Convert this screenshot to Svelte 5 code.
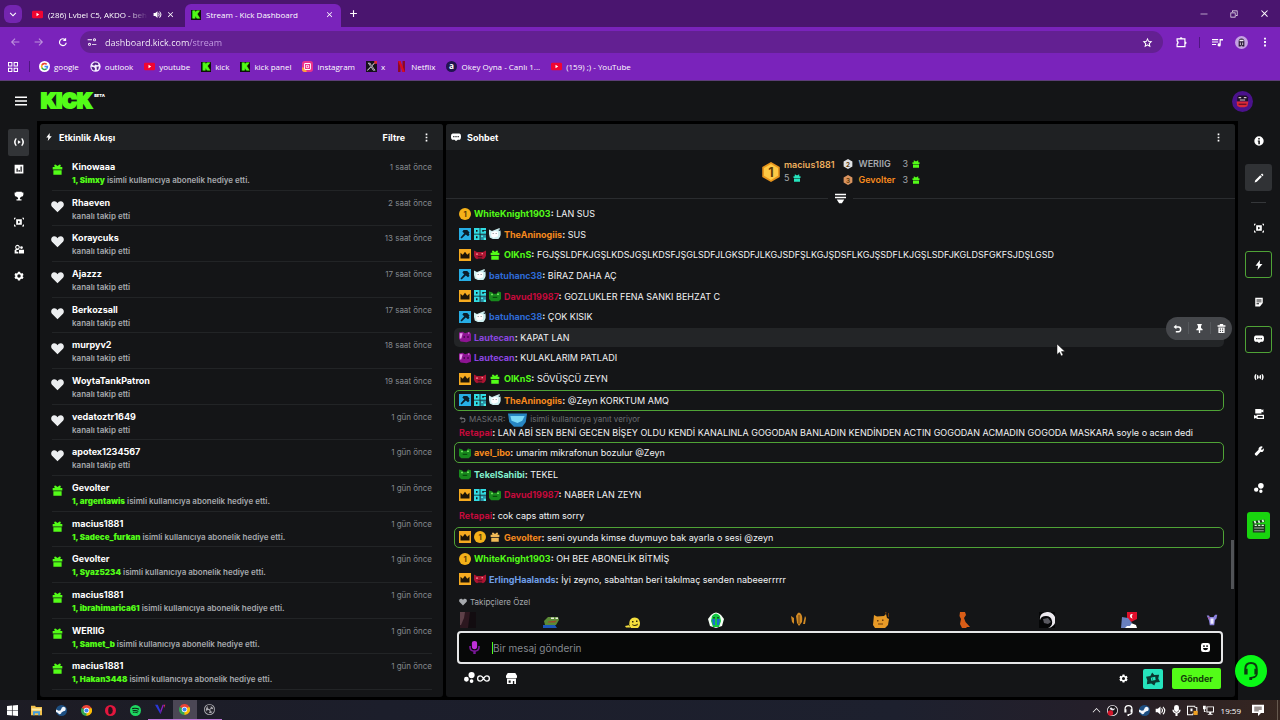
<script lang="ts">
    type Shape = [fill: string, d: string];

    const ink = 'currentColor';

    // every drawing sits on a 16x16 grid
    const art: Record<string, Shape[]> = {
        chevronDown: [[ink, 'M3 5l5 5 5-5 1.5 1.6L8 13.2 1.5 6.600z']],
        chevronUp: [[ink, 'M2 11.5l6-6 6 6 .9-1L8 3.6 1.1 10.5z']],
        youtube: [['#f00532', 'M2 2.5h12q2 0 2 2v7q0 2-2 2H2q-2 0-2-2v-7q0-2 2-2z'], ['#fff', 'M6.5 5.500v5l4-2.5z']],
        speaker: [[ink, 'M1 5.500h3L8 2v12l-4-3.5H1zM10 4.5q3.5 3.5 0 7l-1-1q2-2.5 0-5zM12 2q6 6 0 12l-1-1.2q4.5-4.8 0-9.6z']],
        close: [[ink, 'M2 3.2L3.2 2 8 6.8 12.8 2 14 3.2 9.2 8l4.8 4.8-1.2 1.2L8 9.2 3.2 14 2 12.8 6.8 8z']],
        plus: [[ink, 'M7 2h2v5h5v2H9v5H7V9H2V7h5z']],
        back: [[ink, 'M7.5 2l1.2 1.2-4 4H15v1.6H4.7l4 4L7.5 14l-6-6z']],
        forward: [[ink, 'M8.5 2L7.3 3.2l4 4H1v1.6h10.3l-4 4L8.5 14l6-6z']],
        reload: [[ink, 'M13 1v5.5H7.5l2.2-2.2A4.4 4.4 0 1 0 12.2 9h1.9A6.3 6.3 0 1 1 11 2.9z']],
        site: [[ink, 'M1 3.5h7V5H1zM12 2a2.4 2.4 0 1 1 0 4.8A2.4 2.4 0 1 1 12 2zm0 1.4a1 1 0 1 0 0 2 1 1 0 1 0 0-2zM8 11h7v1.5H8zM4 9.3a2.4 2.4 0 1 1 0 4.8A2.4 2.4 0 1 1 4 9.3zm0 1.4a1 1 0 1 0 0 2 1 1 0 1 0 0-2z']],
        star: [[ink, 'M8 1l2.100 4.700 5 .6-3.700 3.500 1 5L8 12.300l-4.400 2.500 1-5L.9 6.300l5-.6zm0 3.400L6.900 6.900l-2.700.4 2 1.900-.5 2.700L8 10.500l2.300 1.400-.5-2.700 2-1.900-2.700-.4z']],
        puzzle: [[ink, 'M2 3h4.200a2 2 0 0 1 3.800 0h4v4.200a2 2 0 0 1 0 3.800v4H2v-4.600a2 2 0 0 0 0-3.400zm1.600 1.600v1.500a3.600 3.600 0 0 1 0 5.200v2.100h8.800V4.600z']],
        playlist: [[ink, 'M0 3h9v1.600H0zM0 6.500h9v1.600H0zM0 10h6v1.600H0zM11 3h5v2h-3.300v6.500a2.300 2.300 0 1 1-1.700-2.200z']],
        kebab: [[ink, 'M6.5 1h3v3h-3zM6.5 6.5h3v3h-3zM6.5 12h3v3h-3z']],
        minimize: [[ink, 'M1 7.4h14v1.200H1z']],
        restore: [[ink, 'M1 5h10v10H1zm1.300 1.300v7.400h7.400V6.300zM4 1h11v11h-3v-1.300h1.700V2.300H5.300V4H4z']],
        apps: [[ink, 'M0 0h7v7H0zm1.600 1.600v3.800h3.800V1.600zM9 0h7v7H9zm1.600 1.600v3.800h3.800V1.600zM0 9h7v7H0zm1.600 1.600v3.800h3.800v-3.800zM9 9h7v7H9zm1.600 1.600v3.800h3.800v-3.800z']],
        google: [['#fff', 'M8 0a8 8 0 1 1 0 16A8 8 0 1 1 8 0z'], ['#ea4335', 'M3.2 5.3a5.5 5.5 0 0 1 8.8-1.2l-1.7 1.6A3.2 3.2 0 0 0 5.2 6.8z'], ['#fbbc05', 'M3.2 5.3l2 1.5q-.4 1.2 0 2.4l-2 1.5q-1.2-2.7 0-5.4z'], ['#34a853', 'M3.2 10.7l2-1.5a3.2 3.2 0 0 0 4.8 1.3l1.8 1.6a5.5 5.5 0 0 1-8.6-1.4z'], ['#4285f4', 'M8 7h5.4q.4 3.2-1.6 5.1L10 10.5q.7-.5.9-1.3H8z']],
        globe: [['#f4ecff', 'M8 .5a7.500 7.500 0 1 1 0 15 7.500 7.500 0 1 1 0-15z'], ['#55208a', 'M6 2l5 .5 1.500 2.500-2 1L8 5 6 7 3 5.500zM2 8.500l4 .5 1.500 2.500-1.500 2.500-3-2zM9.500 8.500l3.500-.5-1 4.500-2 .5z']],
        instagram: [['#e9338b', 'M4 0h8q4 0 4 4v8q0 4-4 4H4q-4 0-4-4V4q0-4 4-4z'], ['#fba33c', 'M0 9q6 1 7 7H4q-4 0-4-4z'], ['#fff', 'M5 3h6q2 0 2 2v6q0 2-2 2H5q-2 0-2-2V5q0-2 2-2zm-.7 1.3v7.400h7.400V4.300zM8 5.500a2.500 2.500 0 1 1 0 5 2.500 2.500 0 1 1 0-5zm0 1.200a1.300 1.300 0 1 0 0 2.600 1.300 1.300 0 1 0 0-2.600z']],
        xsite: [['#15111a', 'M0 0h16v16H0z'], ['#e7dfee', 'M2.5 2.500h3.300l8 11.200h-3.400zm1.800 1l6.600 9.200h1.100L5.300 3.500zM12 2.500h1.600l-11 11.200H1z'], ['#e02c35', 'M12 0h4v4h-4z']],
        netflix: [['#8f0720', 'M3 0h3.500v16H3zM9.500 0H13v16H9.500z'], ['#d90b20', 'M3 0h3.500L13 16H9.500z']],
        okey: [['#20144f', 'M8 0a8 8 0 1 1 0 16A8 8 0 1 1 8 0z']],
        menu: [[ink, 'M0 2h16v2H0zM0 7h16v2H0zM0 12h16v2H0z']],
        avatar: [['#4b128c', 'M8 0a8 8 0 1 1 0 16A8 8 0 1 1 8 0z'], ['#1d1028', 'M4 4.500l1-1h6l1.200 1.200V8H4z'], ['#d7c4cf', 'M5 4.500h2v1H5zM9 4.500h2v1H9zM6 6.500h4v.7H6z'], ['#db2937', 'M3.5 8h9l-.8 3.600-2.200.8H6l-2-.9z'], ['#651126', 'M5 9.600h6v1H5z']],
        profile: [['#c5a3e3', 'M8 0a8 8 0 1 1 0 16A8 8 0 1 1 8 0z'], ['#2a1a37', 'M4.500 8q-.5-5 3.500-5t3.500 5v5h-7z'], ['#f5edf9', 'M5.5 4.500h5v2h-5zM6 8h1v3H6zM9 8h1v3H9zM7 12h2v1H7z']],
        live: [[ink, 'M3.8 2.500L5 3.600q-3 4.400 0 8.800l-1.200 1.100q-5-5.500 0-11zM12.2 2.500L11 3.600q3 4.400 0 8.800l1.200 1.100q5-5.500 0-11zM6.500 5.500v5l4-2.500z']],
        stats: [[ink, 'M1 1h14v14H1zm3 6v5.500h2V7zm3.200 2.500v3h2v-3zm3.200-5.500v8.500h2V4z']],
        trophy: [[ink, 'M3.5 1h9v1.500H15V6q0 3-3.500 3L9.500 11v2H12v2H4v-2h2.500v-2l-2-2Q1 9 1 6V2.500h2.500z']],
        clip: [[ink, 'M3.5 3.500h9v9h-9zm3 2.300v4.500L10.300 8zM0 1h3v1.500H1.500V4H0zM13 1h3v3h-1.500V2.500H13zM0 12h1.500v1.500H3V15H0zM14.500 12H16v3h-3v-1.500h1.500z']],
        people: [[ink, 'M5.5 1a4 4 0 0 1 2.800 6.700L7 9.500H4v2.700h3V15H1v-5l2-2.200A4 4 0 0 1 5.500 1zm0 2a2 2 0 1 0 0 4 2 2 0 1 0 0-4zM12 3.500A2.200 2.200 0 1 1 12 8a2.200 2.200 0 1 1 0-4.500zM8 9h8v6H8z']],
        gear: [[ink, 'M6.3 1h3.400l.5 2 1.400.8 2-.6 1.700 3L13.900 7.600v1l1.400 1.300-1.700 3-2-.6-1.400.8-.5 2H6.300l-.5-2-1.400-.8-2 .6-1.700-3 1.400-1.300v-1L.7 6.200l1.700-3 2 .6L5.800 3zM8 5.300a2.700 2.700 0 1 0 0 5.500 2.700 2.700 0 1 0 0-5.500z']],
        bolt: [[ink, 'M9.5 0L2.500 9h4.200L5.500 16l8-9.500H9.200z']],
        bubble: [[ink, 'M3 2.500h10q3 0 3 5t-3 5h-2L8 14.500l-2.500-2H3q-3 0-3-5t3-5zm.5 4v2h2v-2zM7 6.500v2h2v-2zm3.500 0v2h2v-2z']],
        gift: [[ink, 'M1 4.500h3L3 1.500l2-.7 3 2.200 3-2.200 2 .7-1 3h3V8H1zM2 9h12v6.500H2z']],
        heart: [[ink, 'M8 15L1.200 8.200C-1 5.500.7 1.500 4 1.500c1.800 0 3.200.9 4 2.500.8-1.600 2.200-2.500 4-2.500 3.300 0 5 4 2.800 6.700z']],
        collapse: [[ink, 'M0 1h16v2.200H0zM0 5.500h16v2.200H0zM2.500 9.500h11L10 15H6z']],
        hexGold: [['#e8951c', 'M8 0l7 4v8l-7 4-7-4V4z'], ['#fec945', 'M8 1.500l5.600 3.300v6.200L8 14.300 2.400 11V4.800z']],
        hexSilver: [['#dfe1e5', 'M8 0l7 4v8l-7 4-7-4V4z']],
        hexBronze: [['#d9935f', 'M8 0l7 4v8l-7 4-7-4V4z']],
        coin: [['#f4b119', 'M8 0a8 8 0 1 1 0 16A8 8 0 1 1 8 0z']],
        hammer: [['#27aee5', 'M0 0h16v16H0z'], ['#0b1c29', 'M6 2.500h5L14 6l-1 1.500 1 1.500-2 2-3-2.200L3.500 14 2 12.500 7 7 4.500 5z']],
        og: [['#31dce3', 'M0 0h7.500v7.500H0zm2.700 2.500v2.500h2V2.500zM8.500 0H16v2.500h-5V5h2V3.500h3v4H8.500zM0 8.500h7.500V16H0zm2.700 2.500v2.500h2V11z'], ['#2a8fa4', 'M8.500 8.500H16V16H8.500z'], ['#49f1ea', 'M9.500 10H12v2H9.500zM13 13h3v3h-3z']],
        cat: [['#cfeff0', 'M0 2l4 2L9 2l5-2 1.500 5q.5 4-1 7l-2 2.500H5L1 12.500 0 8z'], ['#fff', 'M3 6l5-2 4 1v6l-6 2-3-2z'], ['#1b2830', 'M5 7h1v1H5zM9 6.500h1v1H9zM13 2h1.500v2H13z']],
        crown: [['#f6ab20', 'M0 0h16v16H0z'], ['#1c1508', 'M2 5l3 2.500L8 3.500l3 4L14 5v7.500H2z']],
        demon: [['#ad1432', 'M0 2l4 2h8l4-2v7q-1 4-4 4.500l-2-1H6l-2 1Q1 13 0 9z'], ['#ffb7b6', 'M3 6h2v1.500H3zM10 5.500h2V7h-2z'], ['#4b0a1c', 'M5 9.500h6V11H5z']],
        frog: [['#188a1d', 'M0 2l4 1 2 2h4l2-3 4 1v9l-3 3H3l-3-3z'], ['#8dfa70', 'M3 5h2v2H3zM11 4.500h2v2h-2z'], ['#06470c', 'M5 9h6v1.500H5z']],
        pig: [['#8d1493', 'M0 2l5-1 3 2 6-2 2 3v9l-6 2-8-1-2-4z'], ['#ee9af1', 'M1 3h4L3 10H1zM12 1.500l2 1-1 2z'], ['#3d0744', 'M6 7h2v2H6zM11 7h2v2h-2z']],
        reply: [[ink, 'M6 1v3h4q5 0 5 5.500T9.500 15H5v-2.400h4.500q2.800 0 2.800-3T9.800 6.600H6V9.500L1 5.300z']],
        pin: [[ink, 'M4 0h8v2l-1.300.8V7l2.800 2.500V11H9.200v5H6.800v-5H2.500V9.500L5.300 7V2.800L4 2z']],
        trash: [[ink, 'M5 0h6v2h4v3H1V2h4zM2.500 6h11v10h-11zm2.500 2v2h2V8zm4 0v2h2V8zm-4 4v2h2v-2zm4 0v2h2v-2z']],
        info: [[ink, 'M8 .5a7.500 7.500 0 1 1 0 15 7.500 7.500 0 1 1 0-15zM6.800 3v2.500h2.400V3zM6 7v1.600h.9V13h2.500V7z']],
        pencil: [[ink, 'M11 2.500L13 .8 15.200 3l-1.700 2zM10 3.500L12.500 6l-8 8L1 15l1-3.500z']],
        note: [[ink, 'M2 1h12v8.500L9.500 15H2zm2 3v1.400h8V4zm0 3v1.400h8V7zm0 3v1.400h4V10z']],
        signal: [[ink, 'M2.500 3L4 4Q2 8 4 12l-1.500 1Q-1.500 8 2.500 3zM13.500 3L12 4q2 4 0 8l1.500 1q4-5 0-10zM5.500 4.500l1.300.8v5.400l-1.300.8Q3.500 8 5.500 4.500zM10.500 4.500l-1.300.8v5.400l1.300.8q2-3.500 0-7zM7 7h2v2H7z']],
        cameras: [[ink, 'M2 0h10v2l3-1.500v5L12 4.500V7H2zM4 9h12v7H4v-2l-4 1.500v-6L4 11zm2 2v3h8v-3z']],
        wrench: [[ink, 'M9 1.500q3-2 5 0L11.500 4.200v1.600h1.800L15.500 3.500q1 4-1.500 5.500-1.500 1-3.500.3L5 15q-1.500 1-3-.5-1.400-1.400-.4-3L7.300 6Q6.700 3.400 9 1.500z']],
        dots: [[ink, 'M11 0a4.500 4.500 0 1 1 0 9 4.500 4.500 0 1 1 0-9zM3.500 7a3.500 3.500 0 1 1 0 7 3.500 3.500 0 1 1 0-7zM11 10.500a2.700 2.700 0 1 1 0 5.400 2.700 2.700 0 1 1 0-5.400z']],
        clapper: [['#1c3a1e', 'M1 6h14v9.500H1zM.5 2.500L14 .5l.6 3L1 5.700z'], ['#dfffdc', 'M2 2.400l2-.3 1 2.800-2 .3zM6.500 1.700l2-.3 1 2.800-2 .3zM11 1l2-.3 1 2.500-2 .5zM3 6.500h2.500V8H3zM7 6.500h2.500V8H7zM11 6.500h2.500V8H11z'], ['#7b8a7b', 'M2.500 9.500h11v1.500h-11zM2.500 12.500h11V14h-11z']],
        mic: [['#c030d8', 'M8 0q3.200 0 3.200 3v4q0 3-3.200 3T4.800 7V3Q4.800 0 8 0z'], ['#7a1899', 'M1.500 6h2v2Q4 11.500 8 11.500T12.500 8V6h2v2q-.3 4.500-5 5.200V16h-3v-2.800Q1.800 12.500 1.500 8z']],
        infinity: [[ink, 'M4 4q2 0 4 2.600Q10 4 12 4q4 0 4 4t-4 4q-2 0-4-2.600Q6 12 4 12q-4 0-4-4t4-4zm0 1.600Q1.600 5.600 1.600 8T4 10.400q1.500 0 3-2.400-1.500-2.400-3-2.400zm8 0Q10.500 5.600 9 8q1.500 2.400 3 2.400 2.400 0 2.400-2.400T12 5.600z']],
        store: [[ink, 'M2.500 0h11L16 4v2.500l-1 1H1l-1-1V4zM1.500 8.500h13V16H12v-4.500h-2V16H1.500zm2.300 2.500v3h3v-3z']],
        smile: [[ink, 'M4 0h8q4 0 4 4v8q0 4-4 4H4q-4 0-4-4V4q0-4 4-4zm0 4v3h2.500V4zm5.500 0v3H12V4zM3.500 9q.5 4 4.500 4t4.500-4z']],
        ticket: [['#0a3a32', 'M7 .5l2.500 3 5.500-.5-1 4.500 2 4-5 .5-1.500 3.500-3.500-2.500-5 1 .5-4.500L0 5.500l5-1z'], ['#25e4bd', 'M5.500 6.500l5-1 .5 3.500-5 1zm1.500 1v1h1v-1z']],
        headset: [[ink, 'M8 0q6 0 6 6.500V10q0 4-5 4.700V16H6.500v-2.500L9 13q3-.5 3.500-2H11V6h1.200Q12 1.800 8 1.800T3.800 6H5v5H2V6.500Q2 0 8 0z']],
        // emotes
        dark: [['#2c171f', 'M0 0h16v16H0z'], ['#5d4048', 'M0 0h5l-1 6-3 7H0z'], ['#120c10', 'M10 0h6v16H8z']],
        pepe: [['#5b8a36', 'M1 9L5 5h10l1 3-3 5H2z'], ['#e8ecd8', 'M8 5.500h3v1.500H8zM12.500 5.500h2.500v1.500h-2.500z'], ['#9b482e', 'M5 9.500l9-1-2 2H5z'], ['#1c57b8', 'M0 13h12l2 3H0z']],
        yellow: [['#f4df3d', 'M5 8q3-4 8-1.500 3 3.500 1.500 7.500L13 16H6q-3-3-1-8zM0 14l5-1v2.500H1z'], ['#332b0b', 'M7 9h1.500v1.500H7zM11 8.500h1.500V10H11zM7 12q3 2 6-.5l-.5 1.800q-3 1.500-5 0z']],
        crying: [['#f5fff4', 'M3 3q5-5 10 0l3 4-2 7-6 2-6-2-2-7z'], ['#13c943', 'M4 4q4-5 8 0l1 5-2 6H5L3 9z'], ['#1a6fcf', 'M4 7h3v6H5zM9 7h3l-1 6H9z'], ['#0c5a24', 'M5 5h2v1.500H5zM9 5h2v1.500H9z']],
        hands: [['#d18a25', 'M5 4q2-5 4-3 3 2 2 9l-3 4-2-3zM0 4l3 2v6l-2-2zM14 4l1 2-1 6h-2z'], ['#6a3e0d', 'M7.500 3h1v9h-1z']],
        orange: [['#e79a27', 'M1 3l3 1.500 7-.5 2-2 1 4 2 1-1 6-3 3H2L0 13z'], ['#6c3a0a', 'M4 8h1.500v1.500H4zM9 7.500h1.500V9H9zM5 11.500h5v1H5zM12 0h1.500v1.500H12zM15 1h1v4h-1z']],
        dino: [['#d95d17', 'M4 0h5l1 3-2 3 1.500 4 4.500 5h-3l-1 1H6L4 12l1-5-1.500-3z']],
        moon: [['#050607', 'M0 0h16v16H0z'], ['#ece9ef', 'M8 0a8 8 0 0 1 1 16q5-2 4-7T7 4Q2 4 1 8 0 1 8 0z'], ['#595960', 'M4 7l5-1 3 4-3 2-4-1z']],
        flag: [['#e00f2b', 'M6 0h10v7l-6 3-4-4z'], ['#fff', 'M10 2q-2 2 0 4l2 .5-1-1q-1-2 1-3zM5 12l5-1 5 2 1 3H3z'], ['#6880be', 'M1 5l6 1 4 5-2 3H6l-2 2H0z']],
        rabbit: [['#8b82dd', 'M1 2h3l1 2h5l2-3h3l-1 5-2 2-1 7H5L4 9z'], ['#edeaff', 'M6 6h4v7H6z'], ['#b04e90', 'M3 4h2v2H3z']],
        water: [['#2786c2', 'M0 3h16l-1 7-3 4H5l-4-4z'], ['#7ad9f5', 'M2 5h12l-2 4-4 2-5-2z']],
        // taskbar
        windows: [['#fff', 'M0 1.500L7.200.7v6.900H0zM8.200.6L16 0v7.600H8.200zM0 8.500h7.200v6.900L0 14.500zM8.200 8.500H16V16l-7.800-.7z']],
        folder: [['#f2c14e', 'M0 1h6l1 2h9v12H0z'], ['#fde9a3', 'M1 5h14v3H1z'], ['#3b9be0', 'M3 9h10v6h-2.500v-3h-5v3H3z']],
        steam: [['#1d4f82', 'M8 0a8 8 0 1 1 0 16A8 8 0 1 1 8 0z'], ['#f2f6fb', 'M11 2.500a3.300 3.300 0 1 1-.3 6.600L8 11a2.500 2.500 0 0 1-4.900.5L0 10V6.500l4 1.800q1-.6 2 0l1.700-2.600Q7.800 2.800 11 2.500z']],
        chrome: [['#34a853', 'M8 8L1.100 4A8 8 0 0 0 8 16l3.500-6z'], ['#fbbc05', 'M8 8l0 8A8 8 0 0 0 15 4H8z'], ['#ea4335', 'M8 8L1.100 4A8 8 0 0 1 15 4z'], ['#fff', 'M8 4a4 4 0 1 1 0 8 4 4 0 1 1 0-8z'], ['#4285f4', 'M8 5a3 3 0 1 1 0 6 3 3 0 1 1 0-6z']],
        opera: [['#e3173e', 'M8 0a8 8 0 1 1 0 16A8 8 0 1 1 8 0z'], ['#28121c', 'M8 2.500q3.300 1 3.300 5.500T8 13.500 4.700 8 8 2.500z']],
        spotify: [['#1ed760', 'M8 0a8 8 0 1 1 0 16A8 8 0 1 1 8 0z'], ['#0b1f13', 'M3 4.500q6-1.500 10.500 1l-.8 1.300Q8.500 4.800 3.400 6zM3.600 7.600q5-1.200 9 1l-.7 1.100Q8 8 4 9zM4 10.300q4.300-1 7.600.9l-.6.9q-3-1.500-6.600-.8z']],
        vee: [['#2b38d8', 'M0 1h4l4 9v5z'], ['#8a1fc9', 'M8 15V9l3-8h2z'], ['#e0314d', 'M13 1h2l-2 5z']],
        obs: [['#a9a9af', 'M8 0a8 8 0 1 1 0 16A8 8 0 1 1 8 0z'], ['#25242c', 'M8 1.200a6.800 6.800 0 1 1 0 13.600A6.800 6.800 0 1 1 8 1.200z'], ['#a9a9af', 'M6 2.500q-2 3 1.500 5l1-.3Q11 5 9.500 3.500q4 .5 4 4.500-2-2-4-.5l-.5 1q1 3.500 3.500 2.500-2 3.500-5.500 1.500Q9.500 11 7.500 9l-1-.3Q3 8.500 3 11 1.500 6 6 2.500z']],
        recording: [['#e8e4ea', 'M8 0a8 8 0 1 1 0 16A8 8 0 1 1 8 0z'], ['#18151a', 'M8 1.200a6.800 6.800 0 1 1 0 13.600A6.800 6.800 0 1 1 8 1.200z'], ['#e8e4ea', 'M4 5q2-3 4 0 2 1 4-1-1 4-4 4T4 5z'], ['#d3162b', 'M5 7.500a4 4 0 1 1 0 8 4 4 0 1 1 0-8z']],
        camtray: [[ink, 'M0 1h12v2h3v9H9v3H0zm1.500 1.500v11H8V12q2-1 5.500-1V4H11V2.500zM5 5h3v4H5z'], ['#f0a020', 'M9.500 8.500h6v6h-6z']],
        monitor: [[ink, 'M5 2h11v9h-4v2h2v1.300H7V13h2v-2H5zm1.400 1.400v6.200h8.200V3.400zM0 1h4v5H2.700v3H4v1.300H1.300V6H0z']],
        notify: [[ink, 'M0 1h16v11h-4l-4 4v-4H0zm3 2.500v1.200h10V3.500zm0 2.500v1.200h10V6zm0 2.500v1.200h6V8.500z']],
        micwhite: [[ink, 'M8 0q3.500 0 3.500 3v4q0 3-3.500 3T4.500 7V3Q4.500 0 8 0zM2 7h2q.5 4 4 4t4-4h2q-.3 4.500-4.500 5.500V16h-3v-3.500Q2.300 11.500 2 7z']],
    };

    const bookmarks = [
        { icon: 'google', title: 'google' },
        { icon: 'globe', title: 'outlook' },
        { icon: 'youtube', title: 'youtube' },
        { icon: 'kick', title: 'kick' },
        { icon: 'kick', title: 'kick panel' },
        { icon: 'instagram', title: 'instagram' },
        { icon: 'xsite', title: 'x' },
        { icon: 'netflix', title: 'Netflix' },
        { icon: 'okey', title: 'Okey Oyna - Canlı 1...' },
        { icon: 'youtube', title: '(159) ;) - YouTube' },
    ];

    const leftNav = ['live', 'stats', 'trophy', 'clip', 'people', 'gear'];
    const rightNav = ['clip', 'bolt', 'note', 'bubble', 'signal', 'cameras', 'wrench', 'dots', 'clapper'];
    const openPanels = ['bolt', 'bubble'];

    const activity: { name: string; time: string; gifted?: string }[] = [
        { name: 'Kinowaaa', time: '1 saat önce', gifted: 'Simxy' },
        { name: 'Rhaeven', time: '2 saat önce' },
        { name: 'Koraycuks', time: '13 saat önce' },
        { name: 'Ajazzz', time: '17 saat önce' },
        { name: 'Berkozsall', time: '17 saat önce' },
        { name: 'murpyv2', time: '18 saat önce' },
        { name: 'WoytaTankPatron', time: '19 saat önce' },
        { name: 'vedatoztr1649', time: '1 gün önce' },
        { name: 'apotex1234567', time: '1 gün önce' },
        { name: 'Gevolter', time: '1 gün önce', gifted: 'argentawis' },
        { name: 'macius1881', time: '1 gün önce', gifted: 'Sadece_furkan' },
        { name: 'Gevolter', time: '1 gün önce', gifted: 'Syaz5234' },
        { name: 'macius1881', time: '1 gün önce', gifted: 'ibrahimarica61' },
        { name: 'WERIIG', time: '1 gün önce', gifted: 'Samet_b' },
        { name: 'macius1881', time: '1 gün önce', gifted: 'Hakan3448' },
    ];

    type Message = { user: string; tone: string; badges: string[]; text: string; state?: string; reply?: boolean };

    const messages: Message[] = [
        { user: 'WhiteKnight1903', tone: 'lime', badges: ['coin'], text: 'LAN SUS' },
        { user: 'TheAninogiis', tone: 'orange', badges: ['hammer', 'og', 'cat'], text: 'SUS' },
        { user: 'OlKnS', tone: 'lime', badges: ['crown', 'demon', 'gift'], text: 'FGJŞSLDFKJGŞLKDSJGŞLKDSFJŞGLSDFJLGKSDFJLKGJSDFŞLKGJŞDSFLKGJŞSDFLKJGŞLSDFJKGLDSFGKFSJDŞLGSD' },
        { user: 'batuhanc38', tone: 'blue', badges: ['hammer', 'cat'], text: 'BİRAZ DAHA AÇ' },
        { user: 'Davud19987', tone: 'red', badges: ['crown', 'og', 'frog'], text: 'GOZLUKLER FENA SANKI BEHZAT C' },
        { user: 'batuhanc38', tone: 'blue', badges: ['hammer', 'cat'], text: 'ÇOK KISIK' },
        { user: 'Lautecan', tone: 'purple', badges: ['pig'], text: 'KAPAT LAN', state: 'hovered' },
        { user: 'Lautecan', tone: 'purple', badges: ['pig'], text: 'KULAKLARIM PATLADI' },
        { user: 'OlKnS', tone: 'lime', badges: ['crown', 'demon', 'gift'], text: 'SÖVÜŞCÜ ZEYN' },
        { user: 'TheAninogiis', tone: 'orange', badges: ['hammer', 'og', 'cat'], text: '@Zeyn KORKTUM AMQ', state: 'mention' },
        { user: 'Retapai', tone: 'red', badges: [], text: 'LAN ABİ SEN BENİ GECEN BİŞEY OLDU KENDİ KANALINLA GOGODAN BANLADIN KENDİNDEN ACTIN GOGODAN ACMADIN GOGODA MASKARA soyle o acsın dedi', reply: true },
        { user: 'avel_ibo', tone: 'orange', badges: ['frog'], text: 'umarim mikrafonun bozulur @Zeyn', state: 'mention' },
        { user: 'TekelSahibi', tone: 'mint', badges: ['frog'], text: 'TEKEL' },
        { user: 'Davud19987', tone: 'red', badges: ['crown', 'og', 'frog'], text: 'NABER LAN ZEYN' },
        { user: 'Retapai', tone: 'red', badges: [], text: 'cok caps attım sorry' },
        { user: 'Gevolter', tone: 'orange', badges: ['crown', 'coin', 'gift'], text: 'seni oyunda kimse duymuyo bak ayarla o sesi @zeyn', state: 'mention' },
        { user: 'WhiteKnight1903', tone: 'lime', badges: ['coin'], text: 'OH BEE ABONELİK BİTMİŞ' },
        { user: 'ErlingHaalands', tone: 'sky', badges: ['crown', 'demon'], text: 'İyi zeyno, sabahtan beri takılmaç senden nabeeerrrrr' },
    ];

    const emotes = ['dark', 'pepe', 'yellow', 'crying', 'hands', 'orange', 'dino', 'moon', 'flag', 'rabbit'];
    const apps = ['windows', 'folder', 'steam', 'chrome', 'opera', 'spotify', 'vee', 'chrome', 'obs'];
    const tray = ['chevronUp', 'recording', 'headset', 'steam', 'speaker', 'micwhite', 'camtray', 'monitor'];

    let draft = $state('');
    let url = $state('dashboard.kick.com/stream');
</script>

{#snippet icon(name: string, size: number, label = '')}
    <svg class="icon" width={size} height={size} viewBox="0 0 16 16" aria-hidden="true">
        {#each art[name] as [fill, d]}
            <path {fill} {d} fill-rule="evenodd" />
        {/each}
        {#if label}
            <text x="8" y="12" text-anchor="middle">{label}</text>
        {/if}
    </svg>
{/snippet}

{#snippet favicon(name: string)}
    {#if name === 'kick'}
        <span class="kick-mark">K</span>
    {:else}
        {@render icon(name, 11, name === 'okey' ? 'a' : '')}
    {/if}
{/snippet}

<div class="screen">
    <div class="tabs">
        <button class="tab-search" aria-label="Search tabs">{@render icon('chevronDown', 8)}</button>
        <div class="tab">
            {@render icon('youtube', 11)}
            <span class="tab-title faded">(286) Lvbel C5, AKDO - beh</span>
            {@render icon('speaker', 9)}
            <button aria-label="Close tab">{@render icon('close', 7)}</button>
        </div>
        <div class="tab active">
            <span class="kick-mark">K</span>
            <span class="tab-title">Stream - Kick Dashboard</span>
            <button aria-label="Close tab">{@render icon('close', 7)}</button>
        </div>
        <button class="new-tab" aria-label="New tab">{@render icon('plus', 9)}</button>
        <div class="window-buttons">
            <button aria-label="Minimize">{@render icon('minimize', 8)}</button>
            <button aria-label="Restore">{@render icon('restore', 8)}</button>
            <button aria-label="Close">{@render icon('close', 9)}</button>
        </div>
    </div>

    <div class="toolbar">
        <button class="dim" aria-label="Back">{@render icon('back', 10)}</button>
        <button class="dim" aria-label="Forward">{@render icon('forward', 10)}</button>
        <button aria-label="Reload">{@render icon('reload', 10)}</button>
        <div class="address">
            <span class="site-info">{@render icon('site', 10)}</span>
            <input aria-label="Address" bind:value={url} />
            {@render icon('star', 11)}
        </div>
        <div class="toolbar-end">
            <button aria-label="Extensions">{@render icon('puzzle', 12)}</button>
            <span class="rule"></span>
            <button aria-label="Media">{@render icon('playlist', 11)}</button>
            <button aria-label="Profile">{@render icon('profile', 13)}</button>
            <button aria-label="Menu">{@render icon('kebab', 10)}</button>
        </div>
    </div>

    <nav class="bookmarks">
        {@render icon('apps', 10)}
        <span class="rule"></span>
        {#each bookmarks as b}
            <a href="#top">{@render favicon(b.icon)}<span>{b.title}</span></a>
        {/each}
    </nav>

    <header class="site-header">
        <button aria-label="Menu">{@render icon('menu', 12)}</button>
        <a class="logo" href="#top">KICK<sup>BETA</sup></a>
        <button class="me" aria-label="Account">{@render icon('avatar', 21)}</button>
    </header>

    <div class="dashboard">
        <nav class="left-nav">
            <div class="left-items">
                {#each leftNav as item, i}
                    <button class:active={i === 0} aria-label={item}>{@render icon(item, i === 0 ? 12 : 10)}</button>
                {/each}
            </div>
        </nav>

        <main>
            <section class="panel feed">
                <div class="panel-head">
                    {@render icon('bolt', 8)}
                    <h2>Etkinlik Akışı</h2>
                    <button class="filter">Filtre</button>
                    <button aria-label="More">{@render icon('kebab', 9)}</button>
                </div>
                <ul>
                    {#each activity as a}
                        <li>
                            <span class="feed-icon" class:green={a.gifted}>{@render icon(a.gifted ? 'gift' : 'heart', a.gifted ? 11 : 13)}</span>
                            <div>
                                <strong>{a.name}</strong>
                                {#if a.gifted}
                                    <p><b>1, {a.gifted}</b> isimli kullanıcıya abonelik hediye etti.</p>
                                {:else}
                                    <p>kanalı takip etti</p>
                                {/if}
                            </div>
                            <time>{a.time}</time>
                        </li>
                    {/each}
                </ul>
            </section>

            <section class="panel chat">
                <div class="panel-head">
                    {@render icon('bubble', 10)}
                    <h2>Sohbet</h2>
                    <button class="last" aria-label="More">{@render icon('kebab', 9)}</button>
                </div>

                <div class="leaders">
                    <div class="first">
                        {@render icon('hexGold', 20, '1')}
                        <div>
                            <strong>macius1881</strong>
                            <span class="count teal">5 {@render icon('gift', 8)}</span>
                        </div>
                    </div>
                    <div class="others">
                        {@render icon('hexSilver', 10, '2')}
                        <strong class="grey">WERIIG</strong>
                        <span class="count">3 {@render icon('gift', 8)}</span>
                        {@render icon('hexBronze', 10, '3')}
                        <strong class="orange">Gevolter</strong>
                        <span class="count">3 {@render icon('gift', 8)}</span>
                    </div>
                </div>
                <div class="divider">
                    <button aria-label="Collapse">{@render icon('collapse', 11)}</button>
                </div>

                <div class="messages">
                    {#each messages as m}
                        <div class={['message', m.state]} class:reply={m.reply}>
                            {#if m.reply}
                                <div class="reply-to">{@render icon('reply', 7)} <span>MASKAR:</span> {@render icon('water', 19)} <span>isimli kullanıcıya yanıt veriyor</span></div>
                            {/if}
                            <div class="line">
                                {#each m.badges as badge}
                                    <span class="badge" class:green={badge === 'gift' && m.tone === 'lime'} class:gold={badge === 'gift' && m.tone === 'orange'}>
                                        {@render icon(badge, badge === 'gift' ? 10 : 12, badge === 'coin' ? '1' : '')}
                                    </span>
                                {/each}
                                <span class="body"><b class={m.tone}>{m.user}</b><b>:</b> {m.text}</span>
                            </div>
                            {#if m.state === 'hovered'}
                                <div class="actions">
                                    <button aria-label="Reply">{@render icon('reply', 9)}</button>
                                    <button aria-label="Pin">{@render icon('pin', 9)}</button>
                                    <button aria-label="Delete">{@render icon('trash', 9)}</button>
                                </div>
                            {/if}
                        </div>
                    {/each}
                    <span class="thumb"></span>
                </div>

                <div class="composer">
                    <div class="mode">{@render icon('heart', 8)} Takipçilere Özel</div>
                    <div class="emotes">
                        {#each emotes as emote}
                            <button aria-label={emote}>{@render icon(emote, emote === 'rabbit' ? 12 : 16)}</button>
                        {/each}
                    </div>
                    <div class="field">
                        {@render icon('mic', 13)}
                        <span class="caret"></span>
                        <input aria-label="Mesaj" placeholder="Bir mesaj gönderin" bind:value={draft} />
                        <button aria-label="Emotes">{@render icon('smile', 9)}</button>
                    </div>
                    <div class="tools">
                        <span class="points">{@render icon('dots', 11)} {@render icon('infinity', 13)}</span>
                        <button aria-label="Store">{@render icon('store', 11)}</button>
                        <button class="settings" aria-label="Settings">{@render icon('gear', 9)}</button>
                        <button class="ticket" aria-label="Gift">{@render icon('ticket', 14)}</button>
                        <button class="send">Gönder</button>
                    </div>
                </div>
            </section>
        </main>

        <aside class="right-nav">
            <button aria-label="Info">{@render icon('info', 10)}</button>
            <button class="active" aria-label="Edit">{@render icon('pencil', 10)}</button>
            <span class="nav-rule"></span>
            <div class="widgets">
                {#each rightNav as item}
                    <button class:open={openPanels.includes(item)} class:studio={item === 'clapper'} aria-label={item}>
                        {@render icon(item, item === 'clapper' ? 14 : 10)}
                    </button>
                {/each}
            </div>
        </aside>
        <button class="support" aria-label="Support">{@render icon('headset', 18)}</button>
    </div>

    <footer class="taskbar">
        <div class="apps">
            {#each apps as app, i}
                <button class:running={i > 5} class:focused={i === 7} aria-label={app}>{@render icon(app, 11)}</button>
            {/each}
        </div>
        <div class="tray">
            {#each tray as t}
                <span>{@render icon(t, t === 'chevronUp' ? 9 : 11)}</span>
            {/each}
            <time>19:59</time>
            <span class="notify">{@render icon('notify', 12)}</span>
        </div>
    </footer>

    <svg class="cursor" width="10" height="14" viewBox="0 0 10 14">
        <path d="M1 1v10.500l2.500-2.200L5.200 13l1.900-.9-1.700-3.500H9z" fill="#fff" stroke="#111" stroke-width=".5" />
    </svg>
</div>

<style>
    :global(body) {
        margin: 0;
        background: #000;
    }

    .screen {
        position: relative;
        display: flex;
        flex-direction: column;
        min-height: 100vh;
        color: #fff;
        font-family: Inter, sans-serif;
        font-size: 9px;
        overflow: hidden;
    }

    button {
        display: flex;
        align-items: center;
        justify-content: center;
        padding: 0;
        border: 0;
        background: none;
        color: inherit;
        font: inherit;
    }

    input {
        min-width: 0;
        flex: 1;
        padding: 0;
        border: 0;
        outline: 0;
        background: none;
        color: inherit;
        font: inherit;
    }

    a {
        color: inherit;
        text-decoration: none;
    }

    h2, p, ul {
        margin: 0;
        padding: 0;
        list-style: none;
    }

    .icon {
        display: block;
        flex: none;
    }

    .icon text {
        fill: #5e3a05;
        font-size: 10px;
        font-weight: 700;
    }

    .kick-mark {
        display: grid;
        place-items: center;
        flex: none;
        width: 10px;
        height: 10px;
        background: #0b1208;
        color: #53fc18;
        font: 900 9px/10px Inter, sans-serif;
        -webkit-text-stroke: 1px #53fc18;
    }

    /* browser */
    .tabs, .toolbar, .bookmarks {
        display: flex;
        align-items: center;
        font-family: "Open Sans", "Noto Sans", sans-serif;
        font-size: 8px;
    }

    .tabs {
        height: 27px;
        background: #4a156f;
    }

    .tab-search {
        width: 18px;
        height: 18px;
        margin: 0 4px;
        border-radius: 6px;
        background: #7425b0;
    }

    .tab {
        display: flex;
        align-items: center;
        gap: 5px;
        box-sizing: border-box;
        width: 156px;
        height: 23px;
        padding: 0 8px 2px 6px;
        align-self: flex-end;
        border-radius: 6px 6px 0 0;
    }

    .tab:not(.active) {
        width: 159px;
        padding-right: 11px;
    }

    .tab.active {
        background: #7a23bb;
    }

    .tab-title {
        flex: 1;
        white-space: nowrap;
    }

    .faded {
        mask-image: linear-gradient(90deg, #000 80%, transparent);
    }

    .new-tab {
        margin-left: 8px;
    }

    .window-buttons {
        display: flex;
        gap: 22px;
        margin-left: auto;
        padding-right: 11px;
    }

    .toolbar {
        gap: 14px;
        padding: 4px 10px 0;
        height: 22px;
        background: #7a23bb;
    }

    .dim {
        opacity: .5;
    }

    .address {
        display: flex;
        align-items: center;
        flex: 1;
        height: 22px;
        margin: 0 -2px;
        padding-right: 10px;
        border-radius: 11px;
        background: #632092;
    }

    .site-info {
        margin: 0 8px 0 7px;
    }

    .address input {
        font-size: 9px;
        color: transparent;
        background: linear-gradient(90deg, #fff 84px, #c9a3e8 84px);
        background-clip: text;
    }

    .toolbar-end {
        display: flex;
        align-items: center;
        gap: 12px;
    }

    .rule {
        width: 1px;
        height: 11px;
        background: #4f1682;
    }

    .bookmarks {
        gap: 11px;
        height: 27px;
        padding: 0 8px;
        border-bottom: 1px solid #5d3d78;
        background: #7a23bb;
    }

    .bookmarks .rule {
        margin-right: -2px;
    }

    .bookmarks a {
        display: flex;
        align-items: center;
        gap: 4px;
    }

    .bookmarks .icon text {
        fill: #fff;
        font-size: 12px;
    }

    /* site */
    .site-header {
        display: flex;
        align-items: center;
        height: 40px;
        padding: 0 27px 0 15px;
        background: #141517;
    }

    .logo {
        margin-left: 14px;
        color: #53fc18;
        font-size: 20px;
        font-weight: 900;
        line-height: 24px;
        -webkit-text-stroke: 2px #53fc18;
    }

    .logo sup {
        margin-left: 2px;
        vertical-align: 11px;
        color: #fff;
        font-size: 4px;
        line-height: 4px;
        -webkit-text-stroke: 0;
    }

    .me {
        margin-left: auto;
    }

    .dashboard {
        position: relative;
        display: flex;
        flex: 1;
        background: #141517;
    }

    .left-nav {
        width: 37px;
    }

    .left-items {
        display: grid;
        grid-auto-rows: 1fr;
        height: 160px;
        margin: 8px 8px 0;
    }

    .left-items .active {
        border-radius: 2px;
        background: #323437;
    }

    main {
        display: flex;
        flex: 1;
        gap: 3px;
        min-width: 0;
        padding: 3px;
        background: #000;
    }

    .panel {
        display: flex;
        flex-direction: column;
        border-radius: 3px;
        background: #141517;
        overflow: hidden;
    }

    .feed {
        width: 403px;
    }

    .chat {
        flex: 1;
        min-width: 0;
    }

    .panel-head {
        display: flex;
        align-items: center;
        height: 26px;
        padding: 0 12px 0 5px;
        background: #1f2123;
    }

    .panel-head .filter {
        margin: 0 17px 0 auto;
        font-weight: 700;
    }

    .panel-head .last {
        margin-left: auto;
    }

    h2 {
        margin-left: 6px;
        font-size: 9px;
        font-weight: 700;
    }

    .feed ul {
        display: grid;
        grid-auto-rows: 1fr;
        flex: 1;
        margin: 5px 11px 7px 12px;
    }

    li {
        display: flex;
        border-bottom: 1px solid #222426;
    }

    .feed-icon {
        display: flex;
        justify-content: center;
        width: 11px;
        margin: 9px 9px 0 0;
        color: #eceef0;
    }

    .green {
        color: #53fc18;
    }

    li div {
        flex: 1;
        padding-top: 5px;
    }

    li strong {
        display: block;
        font-size: 9px;
        line-height: 14px;
    }

    li p {
        color: #a6a9ad;
        font-size: 8px;
        font-weight: 600;
        line-height: 13px;
    }

    li b {
        color: #53fc18;
    }

    li time {
        padding-top: 5px;
        color: #85898e;
        font-size: 8px;
        line-height: 14px;
    }

    .leaders {
        display: flex;
        justify-content: center;
        gap: 9px;
        height: 43px;
    }

    .leaders strong {
        font-weight: 600;
        line-height: 12px;
        color: #efb05f;
    }

    .first {
        display: flex;
        align-items: center;
        gap: 3px;
    }

    .first div {
        display: grid;
        gap: 1px;
    }

    .count {
        display: flex;
        align-items: center;
        gap: 4px;
        color: #a6a9ad;
        line-height: 12px;
    }

    .count .icon {
        color: #53fc18;
    }

    .teal .icon {
        color: #25e4bd;
    }

    .others {
        display: grid;
        grid-template-columns: 10px auto auto;
        align-content: center;
        align-items: center;
        column-gap: 5px;
        row-gap: 4px;
    }

    .others .count {
        margin-left: 2px;
    }

    .leaders .grey {
        color: #a6a9ad;
    }

    .orange, .leaders .orange {
        color: #f78a1e;
    }

    .divider {
        display: flex;
        align-items: center;
        gap: 7px;
        height: 11px;
    }

    .divider::before, .divider::after {
        content: "";
        flex: 1;
        height: 1px;
        background: #2a2c2f;
    }

    .messages {
        position: relative;
        display: flex;
        flex: 1;
        flex-direction: column;
        justify-content: space-between;
        padding: 0 11px 5px 8px;
    }

    .message {
        position: relative;
        padding: 0 5px;
        border-radius: 5px;
    }

    .line {
        display: flex;
        align-items: center;
        gap: 3px;
        height: 19px;
    }

    .badge {
        display: flex;
        justify-content: center;
        width: 12px;
    }

    .gold {
        color: #f1ba56;
    }

    .body {
        white-space: nowrap;
        color: #f2f3f4;
    }

    .lime { color: #53fc18; }
    .blue { color: #2e6bd6; }
    .red { color: #c40a3c; }
    .purple { color: #8b45e0; }
    .mint { color: #83f0cf; }
    .sky { color: #6f9fe8; }

    .hovered {
        background: #232527;
    }

    .mention {
        padding: 0 4px;
        border: 1px solid #4fa336;
    }

    .reply {
        padding-bottom: 2px;
    }

    .reply .line {
        height: 12px;
    }

    .reply-to {
        display: flex;
        align-items: center;
        gap: 3px;
        height: 14px;
        color: #6c6f73;
        font-size: 8px;
    }

    .actions {
        position: absolute;
        right: -8px;
        bottom: 7px;
        display: flex;
        align-items: center;
        height: 23px;
        border-radius: 12px;
        background: #45474b;
    }

    .actions button {
        width: 22px;
    }

    .actions button + button {
        border-left: 1px solid #55585c;
        height: 12px;
    }

    .thumb {
        position: absolute;
        right: 1px;
        bottom: 5px;
        width: 3px;
        height: 49px;
        background: #515357;
    }

    .composer {
        padding: 0 12px 8px 11px;
    }

    .mode {
        display: flex;
        align-items: center;
        gap: 3px;
        height: 16px;
        padding-left: 2px;
        color: #a6a9ad;
        font-size: 8px;
    }

    .emotes {
        display: flex;
        justify-content: space-between;
        height: 16px;
        margin: 2px 3px 3px;
    }

    .emotes button {
        width: 16px;
    }

    .field {
        display: flex;
        align-items: center;
        box-sizing: border-box;
        height: 33px;
        padding: 0 11px 0 9px;
        border: 2px solid #e6e7e8;
        border-radius: 4px;
        background: #070808;
        font-size: 10px;
    }

    .caret {
        width: 1px;
        height: 12px;
        margin-left: 11px;
        background: #53fc18;
    }

    .field input::placeholder {
        color: #85898e;
        opacity: 1;
    }

    .tools {
        display: flex;
        align-items: center;
        height: 21px;
        padding: 0 2px 0 7px;
        margin-top: 4px;
    }

    .points {
        display: flex;
        gap: 2px;
        margin-right: 16px;
    }

    .settings {
        margin-left: auto;
    }

    .ticket {
        width: 20px;
        height: 20px;
        margin: 0 9px 0 15px;
        border-radius: 2px;
        background: #25e4bd;
    }

    .send {
        height: 21px;
        padding: 0 8px;
        border-radius: 2px;
        background: #53fc18;
        color: #143c0a;
        font-weight: 700;
    }

    .right-nav {
        display: flex;
        flex-direction: column;
        align-items: center;
        gap: 10px;
        box-sizing: border-box;
        width: 42px;
        padding: 6px 1px 0 0;
    }

    .right-nav button {
        box-sizing: border-box;
        width: 27px;
        height: 27px;
        border-radius: 3px;
    }

    .right-nav .active {
        background: #303235;
    }

    .nav-rule {
        width: 15px;
        height: 1px;
        margin: 1px 0;
        background: #35373a;
    }

    .widgets {
        display: flex;
        flex-direction: column;
        align-items: center;
        justify-content: space-between;
        height: 325px;
    }

    .widgets .open {
        border: 1px solid #4fa336;
    }

    .widgets .studio {
        width: 23px;
        background: #19d40f;
    }

    .support {
        position: absolute;
        right: 13px;
        bottom: 13px;
        width: 32px;
        height: 32px;
        border-radius: 50%;
        background: #09f916;
        color: #0c3b10;
    }

    .taskbar {
        display: flex;
        justify-content: space-between;
        height: 20px;
        background: linear-gradient(90deg, #1d1c24, #1c1e2b 30%, #1d202e 70%, #241f2a 85%, #362620);
    }

    .apps {
        display: grid;
        grid-template-columns: repeat(9, 1fr);
        width: 222px;
    }

    .apps .running {
        border-bottom: 1px solid #c278d8;
    }

    .apps .focused {
        background: #4b4755;
    }

    .tray {
        display: flex;
        align-items: center;
        padding-right: 2px;
        border-right: 1px solid #66594f;
        margin-right: 2px;
        font-family: "Open Sans", sans-serif;
        font-size: 8px;
    }

    .tray span {
        display: flex;
        justify-content: center;
        width: 16px;
    }

    .tray time {
        margin-left: 4px;
    }

    .tray .notify {
        margin: 0 9px;
    }

    .cursor {
        position: absolute;
        left: 1056px;
        top: 343px;
    }
</style>
